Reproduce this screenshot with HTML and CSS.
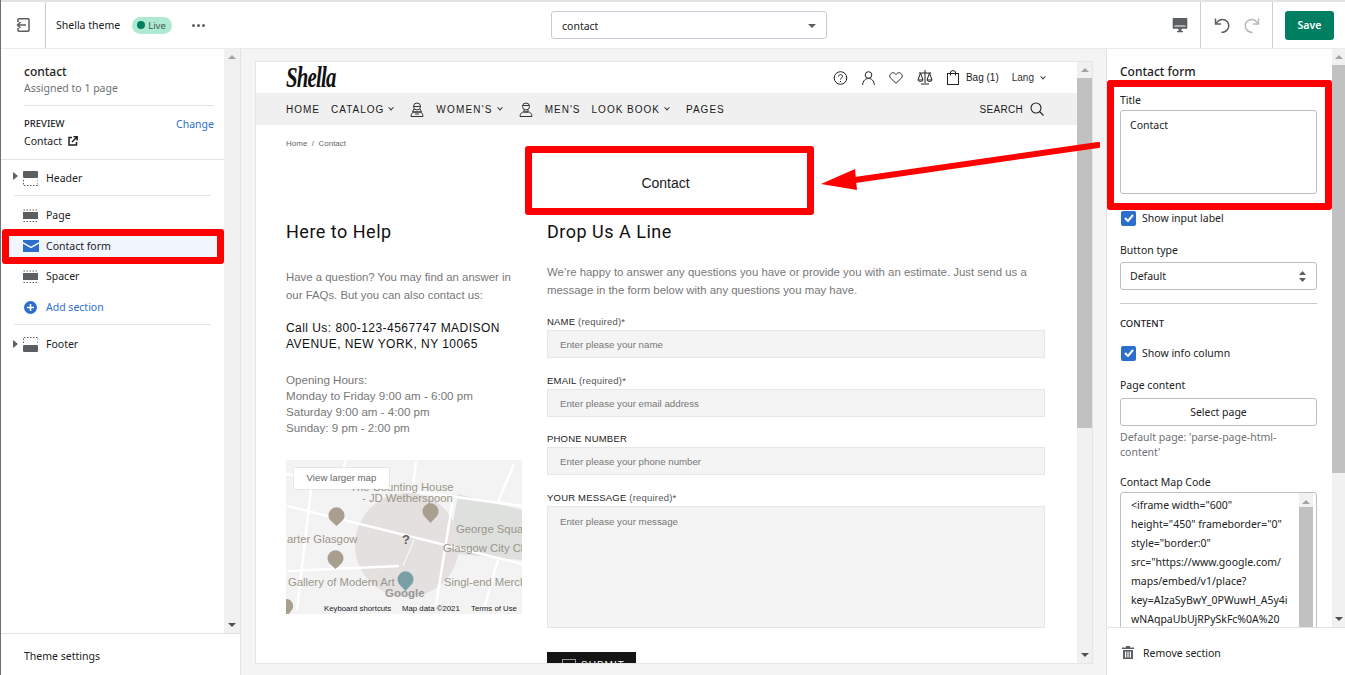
FILE: index.html
```html
<!DOCTYPE html>
<html>
  <head>
    <title>Shella theme - contact</title>
    <link rel="stylesheet" href="styles.css">
  </head>
  <body>
    <header class="topbar">
      <div class="exit-box">
        <svg width="14" height="14" viewBox="0 0 14 14" fill="none" stroke="#5c5f62" stroke-width="1.500"><path d="M2 4V1.500a.7.700 0 0 1 .7-.7h9.600a.7.700 0 0 1 .7.700v11a.7.700 0 0 1-.7.700H2.700a.7.700 0 0 1-.7-.7V10"/><path d="M10 7H1.500M4.500 4L1.500 7l3 3"/></svg>
      </div>
      <div class="theme-info">
        <span class="theme-name">Shella theme</span>
        <span class="live-badge"><i class="live-dot"></i>Live</span>
        <span class="dots"><i></i><i></i><i></i></span>
      </div>
      <div class="template-area">
        <div class="template-select">
          <span>contact</span>
          <i class="caret-down"></i>
        </div>
      </div>
      <div class="device-box">
        <svg width="16" height="16" viewBox="0 0 16 16"><path fill="#5c5f62" d="M1.500 1h13a.8.800 0 0 1 .8.800V11a.8.800 0 0 1-.8.800h-13A.8.800 0 0 1 .7 11V1.800A.8.800 0 0 1 1.500 1zM5 14h6v1.200H5zM6.500 11.500h3V14h-3z"/><path fill="#fff" d="M2.500 8.500h11v1h-11z"/></svg>
      </div>
      <div class="undo-box">
        <svg width="17" height="17" viewBox="0 0 17 17" fill="none" stroke="#5c5f62" stroke-width="1.500"><path d="M1.500 1.500v5.500h5.500"/><path d="M2 6.500C4.500 3 8 1.800 11 3c4 1.700 4.800 6.500 2.500 9.500-1.600 2-3.800 3-6 3"/></svg>
        <svg width="17" height="17" viewBox="0 0 17 17" fill="none" stroke="#b5b8bb" stroke-width="1.500"><path d="M15.500 1.500v5.500H10"/><path d="M15 6.500C12.500 3 9 1.800 6 3c-4 1.700-4.800 6.500-2.500 9.500 1.600 2 3.800 3 6 3"/></svg>
      </div>
      <div class="save-box"><button class="save-btn">Save</button></div>
    </header>

    <div class="workspace">
      <aside class="left-panel">
        <div class="left-main">
          <div class="left-scroll">
            <div class="page-head">
              <div class="page-title">contact</div>
              <div class="page-sub">Assigned to 1 page</div>
              <div class="preview-row">
                <div>
                  <div class="caps-label">PREVIEW</div>
                  <div class="preview-link">Contact
                    <svg width="10" height="10" viewBox="0 0 10 10" fill="none" stroke="#202223" stroke-width="1.500"><path d="M4 1.500H1v7.500h7.500V6"/><path d="M4 6l5-5M5.500 .8h3.700v3.700"/></svg>
                  </div>
                </div>
                <span class="change-link">Change</span>
              </div>
            </div>

            <div class="section-row row-header">
              <i class="tree-arrow"></i>
              <svg class="sec-icon" width="15" height="15" viewBox="0 0 15 15"><rect y="0" width="15" height="7" rx="1" fill="#5c5f62"/><path d="M.5 9v5.500H15V9" fill="none" stroke="#5c5f62" stroke-dasharray="1.500 1.500"/></svg>
              <span>Header</span>
            </div>
            <div class="tree-divider"></div>
            <div class="section-row row-page">
              <svg class="sec-icon" width="15" height="15" viewBox="0 0 15 15"><path d="M.5 2h14.500" fill="none" stroke="#5c5f62" stroke-dasharray="1.500 1.500"/><rect y="4" width="15" height="7" fill="#5c5f62"/><path d="M.5 13.500h14.500" fill="none" stroke="#5c5f62" stroke-dasharray="1.500 1.500"/></svg>
              <span>Page</span>
            </div>
            <div class="section-row row-active">
              <svg class="sec-icon" width="16" height="12" viewBox="0 0 16 12"><path fill="#2c6ecb" d="M0 0h16v2L8 6.500 0 2zM0 3.800l8 4.500 8-4.500V12H0z"/></svg>
              <span>Contact form</span>
            </div>
            <div class="section-row row-spacer">
              <svg class="sec-icon" width="15" height="15" viewBox="0 0 15 15"><path d="M.5 2h14.500" fill="none" stroke="#5c5f62" stroke-dasharray="1.500 1.500"/><rect y="4" width="15" height="7" fill="#5c5f62"/><path d="M.5 13.500h14.500" fill="none" stroke="#5c5f62" stroke-dasharray="1.500 1.500"/></svg>
              <span>Spacer</span>
            </div>
            <div class="section-row row-add">
              <svg class="sec-icon" width="15" height="15" viewBox="0 0 15 15"><circle cx="7.500" cy="7.500" r="6.500" fill="#2c6ecb"/><path d="M7.500 4v7M4 7.500h7" stroke="#fff" stroke-width="1.600"/></svg>
              <span>Add section</span>
            </div>
            <div class="tree-divider"></div>
            <div class="section-row row-footer">
              <i class="tree-arrow"></i>
              <svg class="sec-icon" width="15" height="15" viewBox="0 0 15 15"><path d="M.5 6V.5H15V6" fill="none" stroke="#5c5f62" stroke-dasharray="1.500 1.500"/><rect y="8" width="15" height="7" rx="1" fill="#5c5f62"/></svg>
              <span>Footer</span>
            </div>
          </div>
          <div class="bar-track">
            <i class="arrow-up"></i>
            <i class="arrow-down"></i>
          </div>
        </div>
        <div class="theme-settings">Theme settings</div>
      </aside>

      <main class="preview-area">
        <div class="preview-frame">
          <div class="shop">
            <div class="shop-top">
              <span class="shop-logo">Shella</span>
              <div class="shop-tools">
                <svg width="15" height="14" viewBox="0 0 15 14" fill="none" stroke="#222"><circle cx="7.500" cy="7" r="6.300"/><path d="M5.500 5.500C5.500 3 9.500 3 9.500 5.500 9.500 7 7.500 7 7.500 8.500M7.500 10v1"/></svg>
                <svg width="13" height="14" viewBox="0 0 13 14" fill="none" stroke="#222"><circle cx="6.500" cy="4" r="3.300"/><path d="M.6 14C1 9.500 3.500 7.500 6.500 7.500s5.500 2 5.900 6.500"/></svg>
                <svg width="14" height="12" viewBox="0 0 15 13" fill="none" stroke="#222"><path d="M7.500 12.200L1.500 6.500C-.5 3.500 2 .6 4.500 .8c1.500.1 2.400 1 3 2 .6-1 1.500-1.900 3-2C13 .6 15.500 3.500 13.500 6.500z"/></svg>
                <svg width="16" height="15" viewBox="0 0 16 15" fill="none" stroke="#222"><path d="M8 0v13M2 3h12M4 14h8M3.500 3L1 10h5zM12.500 3L10 10h5zM1 10c.5 2 4.500 2 5 0M10 10c.5 2 4.500 2 5 0"/></svg>
                <svg width="12" height="15" viewBox="0 0 12 15" fill="none" stroke="#222"><rect x=".5" y="3.500" width="11" height="11"/><path d="M3.500 5.500V2C3.500 .2 8.500 .2 8.500 2v3.500"/></svg>
                <span class="bag-text">Bag (1)</span>
                <span class="lang-text">Lang <i class="chev"></i></span>
              </div>
            </div>
            <nav class="shop-nav">
              <span>HOME</span>
              <span class="nav-drop">CATALOG <i class="chev"></i></span>
              <svg class="nav-face" width="14" height="15" viewBox="0 0 14 15" fill="none" stroke="#333"><circle cx="7" cy="4.500" r="3.500"/><path d="M3.500 4.500h7M4 7L2.500 10h9L10 7M1 14.500c0-3 2-4.500 3-4.500h6c1 0 3 1.500 3 4.500zM5 12h4"/></svg>
              <span class="nav-drop nav-wide">WOMEN'S <i class="chev"></i></span>
              <svg class="nav-face" width="14" height="15" viewBox="0 0 14 15" fill="none" stroke="#333"><circle cx="7" cy="4.500" r="3.500"/><path d="M3.500 3.500h7M5 8v2h4V8M1 14.500c0-3 2-4.500 4-4.500h4c2 0 4 1.500 4 4.500z"/></svg>
              <span>MEN'S</span>
              <span class="nav-drop">LOOK BOOK <i class="chev"></i></span>
              <span class="nav-pages">PAGES</span>
              <span class="nav-search">SEARCH
                <svg width="14" height="14" viewBox="0 0 14 14" fill="none" stroke="#222" stroke-width="1.100"><circle cx="6" cy="6" r="5"/><path d="M9.500 9.500L13.500 13.500"/></svg>
              </span>
            </nav>
            <div class="breadcrumb">Home &nbsp;/&nbsp; Contact</div>
            <div class="form-title">Contact</div>
            <div class="shop-cols">
              <div class="info-col">
                <h2>Here to Help</h2>
                <p class="info-text">Have a question? You may find an answer in our FAQs. But you can also contact us:</p>
                <p class="call-text">Call Us: 800-123-4567747 MADISON AVENUE, NEW YORK, NY 10065</p>
                <p class="hours-text">Opening Hours:<br>Monday to Friday 9:00 am - 6:00 pm<br>Saturday 9:00 am - 4:00 pm<br>Sunday: 9 pm - 2:00 pm</p>
                <div class="map">
                  <svg width="236" height="154" viewBox="0 0 236 154">
                    <rect width="236" height="154" fill="#f3f3f3"/>
                    <path d="M172 34L236 50V100L162 93z" fill="#dde0dd"/>
                    <circle cx="121" cy="85" r="52" fill="#e4e0e0"/>
                    <g fill="none" stroke="#fff" stroke-width="2.500">
                      <path d="M0 14L236 46M1 46L236 104M25 29L11 150M130 2L127 26M167 39L150 145M212 100L198 148M1 111L113 106M60 0L54 20M228 4L212 42"/>
                    </g>
                    <path d="M128 80L117 106" fill="none" stroke="#fff"/>
                    <g fill="#a89f8e">
                      <path d="M44 60a8 8 0 1 1 13 0l-6.500 6z"/>
                      <path d="M43 103a8 8 0 1 1 13 0l-6.500 6z"/>
                      <path d="M138 56a8 8 0 1 1 13 0l-6.500 7z"/>
                      <path d="M0 154v-15a7 7 0 0 1 5 12l-2 3z"/>
                    </g>
                    <path d="M113 124a8 8 0 1 1 13 0l-6.500 7z" fill="#7a9ea6"/>
                    <g font-family="Liberation Sans, sans-serif" font-size="11.300" fill="#9a968a">
                      <text x="64" y="31">The Counting House</text>
                      <text x="76" y="42">- JD Wetherspoon</text>
                      <text x="170" y="73">George Squar</text>
                      <text x="157" y="92">Glasgow City Ch</text>
                      <text x="1" y="83">arter Glasgow</text>
                      <text x="2" y="126">Gallery of Modern Art</text>
                      <text x="158" y="126">Singl-end Merch</text>
                    </g>
                    <text x="116" y="84" font-family="Liberation Sans, sans-serif" font-size="13" font-weight="bold" fill="#6b5d5d">?</text>
                    <text x="99" y="137" font-family="Liberation Sans, sans-serif" font-size="11.500" font-weight="bold" fill="#999">Google</text>
                    <g font-family="Liberation Sans, sans-serif" font-size="7.800" fill="#222">
                      <text x="38" y="151">Keyboard shortcuts</text>
                      <text x="116" y="151">Map data ©2021</text>
                      <text x="185" y="151">Terms of Use</text>
                    </g>
                  </svg>
                  <span class="map-btn">View larger map</span>
                </div>
              </div>
              <div class="form-col">
                <h2>Drop Us A Line</h2>
                <p class="info-text form-intro">We’re happy to answer any questions you have or provide you with an estimate. Just send us a message in the form below with any questions you may have.</p>
                <label class="field-label">NAME <span class="req">(required)*</span></label>
                <div class="field">Enter please your name</div>
                <label class="field-label">EMAIL <span class="req">(required)*</span></label>
                <div class="field">Enter please your email address</div>
                <label class="field-label">PHONE NUMBER</label>
                <div class="field">Enter please your phone number</div>
                <label class="field-label">YOUR MESSAGE <span class="req">(required)*</span></label>
                <div class="field field-big">Enter please your message</div>
                <div class="submit-btn"><i class="submit-box"></i>SUBMIT</div>
              </div>
            </div>
          </div>
          <div class="bar-track frame-bar">
            <i class="arrow-up"></i>
            <i class="bar-thumb"></i>
            <i class="arrow-down"></i>
          </div>
        </div>
      </main>

      <aside class="right-panel">
        <div class="right-main">
          <div class="right-scroll">
            <div class="right-title">Contact form</div>
            <div class="set-label">Title</div>
            <div class="set-textarea">Contact</div>
            <div class="check-row check-first"><i class="check-box"><svg width="10" height="8" viewBox="0 0 10 8" fill="none" stroke="#fff" stroke-width="2"><path d="M1 4l3 3 5-6"/></svg></i>Show input label</div>
            <div class="set-label label-button">Button type</div>
            <div class="set-select">Default
              <svg width="7" height="11" viewBox="0 0 7 11" fill="#5c5f62"><path d="M3.500 0L7 4H0zM3.500 11L0 7h7z"/></svg>
            </div>
            <div class="set-divider"></div>
            <div class="caps-label content-label">CONTENT</div>
            <div class="check-row check-second"><i class="check-box"><svg width="10" height="8" viewBox="0 0 10 8" fill="none" stroke="#fff" stroke-width="2"><path d="M1 4l3 3 5-6"/></svg></i>Show info column</div>
            <div class="set-label label-page">Page content</div>
            <div class="set-button">Select page</div>
            <div class="set-help">Default page: 'parse-page-html-<br>content'</div>
            <div class="set-label label-map">Contact Map Code</div>
            <div class="code-box">
              <div class="code-text">&lt;iframe width="600"<br>height="450" frameborder="0"<br>style="border:0"<br>src="https://www.google.com/<br>maps/embed/v1/place?<br>key=AIzaSyBwY_0PWuwH_A5y4i<br>wNAqpaUbUjRPySkFc%0A%20</div>
              <div class="code-bar">
                <i class="arrow-up"></i>
                <i class="code-thumb"></i>
              </div>
            </div>
          </div>
          <div class="bar-track right-bar">
            <i class="arrow-up"></i>
            <i class="bar-thumb"></i>
            <i class="arrow-down"></i>
          </div>
        </div>
        <div class="remove-row">
          <svg width="12" height="13" viewBox="0 0 12 13" fill="#5c5f62"><path d="M4 0h4v1.500h4V3H0V1.500h4zM1 4h10v9H1zM3 5.500V11.500h1.200V5.500zM5.400 5.500V11.500h1.200V5.500zM7.800 5.500V11.500H9V5.500z" fill-rule="evenodd"/></svg>
          Remove section
        </div>
      </aside>
    </div>

    <div class="red-box red-left"></div>
    <div class="red-box red-center"></div>
    <div class="red-box red-right"></div>
    <svg class="red-arrow" width="280" height="55" viewBox="0 0 280 55">
      <path d="M278 5L35 40" stroke="#f00" stroke-width="6" stroke-linecap="round"/>
      <path d="M1 44L35 29l2 21z" fill="#f00"/>
    </svg>
  </body>
</html>
```

FILE: styles.css
```css
* {
  box-sizing: border-box;
}
html, body {
  margin: 0;
  height: 100%;
  overflow: hidden;
}
body {
  display: flex;
  flex-direction: column;
  font-family: "Noto Sans", sans-serif;
  font-size: 10.500px;
  color: #202223;
  background: #f4f4f4;
  border-left: 1px solid #6d7175;
}
i {
  display: block;
  font-style: normal;
}

/* top bar */
.topbar {
  display: flex;
  height: 49px;
  flex: none;
  background: #fff;
  border-top: 2px solid #e1e3e5;
  border-bottom: 1px solid #ebebeb;
  align-items: stretch;
}
.exit-box {
  width: 45px;
  flex: none;
  border-right: 1px solid #c9cccf;
  display: flex;
  align-items: center;
  justify-content: center;
}
.theme-info {
  width: 505px;
  flex: none;
  display: flex;
  align-items: center;
  padding-left: 10px;
}
.live-badge {
  display: flex;
  align-items: center;
  gap: 3px;
  height: 17px;
  margin-left: 12px;
  padding: 0 6px 0 5px;
  border-radius: 9px;
  background: #aee9d1;
  font-size: 9.500px;
  color: #3d5a50;
}
.live-dot {
  width: 8px;
  height: 8px;
  border-radius: 50%;
  background: #007f5f;
}
.dots {
  display: flex;
  gap: 2px;
  margin-left: 20px;
}
.dots i {
  width: 3px;
  height: 3px;
  border-radius: 50%;
  background: #5c5f62;
}
.template-area {
  flex: none;
  width: 276px;
  display: flex;
  align-items: center;
}
.template-select {
  width: 276px;
  height: 28px;
  border: 1px solid #c4cdd5;
  border-radius: 3px;
  padding: 2px 10px 0;
  display: flex;
  align-items: center;
  justify-content: space-between;
}
.caret-down {
  width: 0;
  height: 0;
  border-left: 4px solid transparent;
  border-right: 4px solid transparent;
  border-top: 4px solid #5c5f62;
}
.device-box {
  margin-left: auto;
  width: 40px;
  flex: none;
  display: flex;
  align-items: center;
  justify-content: center;
}
.undo-box {
  width: 73px;
  flex: none;
  border-left: 1px solid #c9d0d6;
  border-right: 1px solid #c9d0d6;
  display: flex;
  align-items: center;
  justify-content: center;
  gap: 12px;
}
.save-box {
  width: 72px;
  flex: none;
  display: flex;
  align-items: center;
  padding-left: 12px;
}
.save-btn {
  width: 49px;
  height: 29px;
  border: 0;
  border-radius: 3px;
  background: #008060;
  color: #fff;
  font-family: "Noto Sans", sans-serif;
  font-size: 10.500px;
  font-weight: 600;
}

.workspace {
  flex: 1;
  display: flex;
  min-height: 0;
}

/* left sidebar */
.left-panel {
  width: 240px;
  flex: none;
  display: flex;
  flex-direction: column;
  background: #fff;
  border-right: 1px solid #e1e3e5;
}
.left-main {
  flex: 1;
  display: flex;
  min-height: 0;
}
.left-scroll {
  flex: 1;
  min-width: 0;
}
.page-head {
  padding: 15px 10px 10px 23px;
  border-bottom: 1px solid #e1e3e5;
  height: 111px;
}
.page-title {
  font-size: 12px;
  font-weight: 500;
  line-height: 16px;
}
.page-sub {
  line-height: 17px;
  color: #6d7175;
}
.preview-row {
  display: flex;
  justify-content: space-between;
  margin-top: 8px;
  padding-top: 10px;
  border-top: 1px solid #e1e3e5;
}
.caps-label {
  font-size: 9.500px;
  font-weight: 500;
  line-height: 16px;
}
.preview-link {
  line-height: 18px;
  display: flex;
  align-items: center;
  gap: 6px;
}
.change-link {
  color: #2c6ecb;
  line-height: 16px;
}
.section-row {
  display: flex;
  align-items: center;
  height: 30px;
  position: relative;
  padding-left: 22px;
  gap: 8px;
}
.sec-icon {
  flex: none;
}
.tree-arrow {
  position: absolute;
  left: 12px;
  top: 11px;
  border-top: 4px solid transparent;
  border-bottom: 4px solid transparent;
  border-left: 5px solid #5c5f62;
}
.tree-divider {
  height: 1px;
  margin: 0 13px;
  background: #e1e3e5;
}
.row-header {
  margin-top: 1px;
  height: 34px;
}
.row-page {
  margin-top: 4px;
}
.row-active {
  background: #f1f5fd;
  margin-top: 1px;
  gap: 7px;
}
.row-add {
  color: #2c6ecb;
  margin-top: 1px;
  margin-bottom: 2px;
}
.row-footer {
  margin-top: 4px;
}
.bar-track {
  width: 16px;
  flex: none;
  background: #f1f1f1;
  position: relative;
  display: flex;
  flex-direction: column;
  align-items: center;
  justify-content: space-between;
  padding: 6px 0;
}
.arrow-up {
  width: 0;
  height: 0;
  border-left: 4px solid transparent;
  border-right: 4px solid transparent;
  border-bottom: 4px solid #a3a3a3;
}
.arrow-down {
  width: 0;
  height: 0;
  border-left: 4px solid transparent;
  border-right: 4px solid transparent;
  border-top: 4px solid #505050;
}
.theme-settings {
  height: 42px;
  flex: none;
  border-top: 1px solid #e1e3e5;
  padding: 15px 0 0 23px;
}

/* preview */
.preview-area {
  flex: 1;
  min-width: 0;
  padding: 12px 13px 11px 14px;
  background: #f4f4f4;
  border-right: 1px solid #e1e3e5;
}
.preview-frame {
  display: flex;
  height: 100%;
  background: #fff;
  border: 1px solid #e6e6e6;
  overflow: hidden;
}
.shop {
  flex: 1;
  min-width: 0;
  font-family: "Liberation Sans", sans-serif;
  color: #1a1a1a;
}
.shop-top {
  height: 31px;
  display: flex;
  align-items: center;
  justify-content: space-between;
  padding: 0 32px 0 30px;
}
.shop-logo {
  display: inline-block;
  font-family: "Liberation Serif", serif;
  font-size: 26px;
  font-weight: bold;
  font-style: italic;
  letter-spacing: -1px;
  color: #111;
  transform: scale(.8, 1.15);
  transform-origin: left center;
}
.shop-tools {
  display: flex;
  align-items: center;
  gap: 14px;
  font-size: 10px;
}
.bag-text {
  margin-left: -7px;
}
.lang-text {
  margin-left: -1px;
  display: flex;
  align-items: center;
  gap: 7px;
  color: #333;
}
.chev {
  display: inline-block;
  width: 4px;
  height: 4px;
  border-right: 1px solid #333;
  border-bottom: 1px solid #333;
  transform: rotate(45deg) translate(-1px, -1px);
}
.shop-nav {
  height: 32px;
  display: flex;
  align-items: center;
  gap: 11px;
  padding: 0 33px 0 30px;
  background: #f0f0f0;
  font-size: 10px;
  letter-spacing: 1px;
}
.nav-drop {
  display: flex;
  align-items: center;
  gap: 5px;
}
.nav-wide {
  letter-spacing: 1.200px;
}
.nav-face {
  margin: 0 1px 0 6px;
}
.nav-pages {
  margin-left: 6px;
}
.nav-search {
  margin-left: auto;
  display: flex;
  align-items: center;
  gap: 7px;
  letter-spacing: .3px;
  font-size: 10px;
}
.breadcrumb {
  padding: 14px 30px 0;
  font-size: 8px;
  line-height: 9px;
  color: #666;
}
.form-title {
  margin-top: 26px;
  padding: 0 32px 0 30px;
  text-align: center;
  font-size: 14px;
  line-height: 18px;
}
.shop-cols {
  display: flex;
  gap: 25px;
  padding: 28px 32px 0 30px;
}
.info-col {
  width: 236px;
  flex: none;
}
.form-col {
  flex: 1;
  min-width: 0;
}
h2 {
  margin: 0;
  font-family: Roboto, sans-serif;
  font-size: 18px;
  font-weight: 400;
  line-height: 24px;
  letter-spacing: .5px;
  color: #111;
}
.info-text {
  margin: 24px 0 0;
  font-size: 11.400px;
  line-height: 18px;
  color: #777;
}
.form-intro {
  margin-top: 19px;
}
.call-text {
  margin: 16px 0 0;
  font-size: 12px;
  line-height: 16px;
  letter-spacing: .45px;
  color: #111;
}
.hours-text {
  margin: 20px 0 0;
  font-size: 11.600px;
  line-height: 16px;
  color: #777;
}
.map {
  position: relative;
  margin-top: 24px;
  height: 154px;
}
.map svg {
  display: block;
}
.map-btn {
  position: absolute;
  left: 8px;
  top: 8px;
  width: 95px;
  height: 21px;
  background: #fff;
  box-shadow: 0 0 1px rgba(0, 0, 0, .3);
  font-size: 9.700px;
  line-height: 20px;
  text-align: center;
  color: #666;
}
.field-label {
  display: block;
  margin-top: 15.500px;
  font-size: 9.500px;
  line-height: 14px;
  letter-spacing: .2px;
  color: #222;
}
.form-intro + .field-label {
  margin-top: 16px;
}
.req {
  color: #555;
}
.field {
  height: 28px;
  margin-top: 1px;
  padding: 0 12px;
  background: #f4f4f4;
  border: 1px solid #e6e6e6;
  font-size: 9.700px;
  line-height: 28px;
  color: #777;
}
.field-big {
  height: 122px;
  padding-top: 2px;
  line-height: 26px;
}
.submit-btn {
  display: flex;
  gap: 5px;
  width: 89px;
  height: 32px;
  margin-top: 24.500px;
  padding: 7px 0 0 15px;
  background: #141414;
  color: #fff;
  font-size: 10px;
  line-height: 13px;
  letter-spacing: 1px;
}
.submit-box {
  width: 14px;
  height: 14px;
  border: 1px solid #999;
}
.frame-bar {
  width: 15px;
}
.frame-bar .bar-thumb {
  position: absolute;
  top: 16px;
  left: 0;
  width: 100%;
  height: 350px;
  background: #c1c1c1;
}

/* right sidebar */
.right-panel {
  width: 238px;
  flex: none;
  display: flex;
  flex-direction: column;
  background: #fff;
}
.right-main {
  flex: 1;
  display: flex;
  min-height: 0;
}
.right-scroll {
  flex: 1;
  min-width: 0;
  overflow: hidden;
  padding: 15px 15px 0 13px;
}
.right-title {
  font-size: 12px;
  font-weight: 500;
  line-height: 16px;
}
.set-label {
  line-height: 16px;
}
.right-title + .set-label {
  margin-top: 12px;
}
.set-textarea {
  height: 84px;
  margin-top: 2px;
  padding: 7px 9px;
  border: 1px solid #babfc3;
  border-radius: 3px;
}
.check-row {
  display: flex;
  align-items: center;
  gap: 6px;
  height: 16px;
  padding-left: 1px;
}
.check-box {
  width: 15px;
  height: 15px;
  border-radius: 2px;
  background: #2c6ecb;
  display: flex;
  align-items: center;
  justify-content: center;
}
.check-first {
  margin-top: 16px;
}
.label-button {
  margin-top: 16px;
}
.set-select {
  height: 28px;
  margin-top: 4px;
  padding: 0 10px 0 9px;
  border: 1px solid #babfc3;
  border-radius: 3px;
  display: flex;
  align-items: center;
  justify-content: space-between;
}
.set-divider {
  height: 1px;
  margin-top: 13px;
  background: #c9cccf;
}
.content-label {
  margin-top: 12px;
}
.check-second {
  margin-top: 13px;
}
.label-page {
  margin-top: 16px;
}
.set-button {
  height: 28px;
  margin-top: 5px;
  border: 1px solid #babfc3;
  border-radius: 3px;
  text-align: center;
  line-height: 26px;
}
.set-help {
  margin-top: 4px;
  line-height: 15px;
  color: #6d7175;
}
.label-map {
  margin-top: 14px;
}
.code-box {
  display: flex;
  height: 150px;
  margin-top: 2px;
  border: 1px solid #babfc3;
  border-radius: 3px;
  overflow: hidden;
}
.code-text {
  flex: 1;
  min-width: 0;
  padding: 3px 0 0 10px;
  line-height: 19px;
  white-space: nowrap;
  overflow: hidden;
}
.code-bar {
  width: 14px;
  margin-right: 3px;
  flex: none;
  background: #f1f1f1;
  padding-top: 7px;
  display: flex;
  flex-direction: column;
  align-items: center;
}
.code-thumb {
  width: 100%;
  height: 130px;
  margin-top: 3px;
  background: #c1c1c1;
}
.right-bar {
  width: 13px;
}
.right-bar .bar-thumb {
  position: absolute;
  top: 16px;
  left: 0;
  width: 100%;
  height: 408px;
  background: #c1c1c1;
}
.remove-row {
  height: 48px;
  flex: none;
  border-top: 1px solid #e1e3e5;
  display: flex;
  align-items: center;
  gap: 9px;
  padding: 2px 0 0 15px;
}

/* red annotations on top of the screenshot */
.red-box {
  position: absolute;
  border: 7px solid #f00;
  border-radius: 3px;
}
.red-left {
  left: 2px;
  top: 229px;
  width: 222px;
  height: 35px;
}
.red-center {
  left: 525px;
  top: 146px;
  width: 289px;
  height: 69px;
}
.red-right {
  left: 1107px;
  top: 80px;
  width: 225px;
  height: 130px;
}
.red-arrow {
  position: absolute;
  left: 820px;
  top: 140px;
}
```
